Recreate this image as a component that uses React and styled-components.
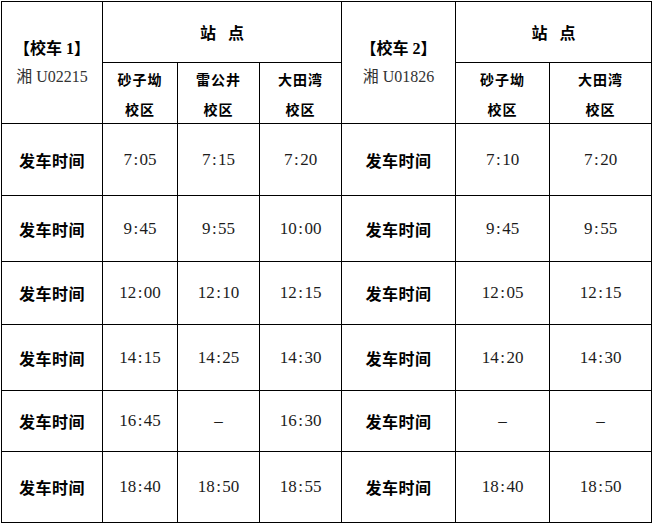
import React from "react";
import styled, { createGlobalStyle } from "styled-components";

const GlobalStyle = createGlobalStyle`
  html, body {
    margin: 0;
    padding: 0;
    background: #fff;
  }
  body {
    font-family: "Liberation Serif", "Noto Sans CJK SC", serif;
  }
`;

const columns = [101, 75, 82, 82, 114, 94, 102];
const rowHeights = [72, 66, 63, 66, 61, 71];

const bus1 = [
  ["7:05", "7:15", "7:20"],
  ["9:45", "9:55", "10:00"],
  ["12:00", "12:10", "12:15"],
  ["14:15", "14:25", "14:30"],
  ["16:45", "-", "16:30"],
  ["18:40", "18:50", "18:55"],
];

const bus2 = [
  ["7:10", "7:20"],
  ["9:45", "9:55"],
  ["12:05", "12:15"],
  ["14:20", "14:30"],
  ["-", "-"],
  ["18:40", "18:50"],
];

const Page = styled.div`
  padding: 1px 0 0 1px;
`;

const Table = styled.table`
  border-collapse: collapse;
  table-layout: fixed;
  width: ${columns.reduce((a, b) => a + b, 0)}px;
  color: #000;
`;

const Cell = styled.td`
  border: 1px solid #000;
  padding: 0;
  text-align: center;
  vertical-align: middle;
`;

const HeadRow = styled.tr`
  height: 61px;
`;

const BusTitle = styled.div`
  font-family: "Liberation Serif", "Noto Sans CJK SC", serif;
  font-weight: 700;
  font-size: 16px;
  line-height: 28px;
  color: #000;
`;

const Plate = styled.div`
  font-family: "Liberation Serif", "Noto Sans CJK SC", serif;
  font-size: 16px;
  line-height: 28px;
  color: #333;
`;

const Station = styled.div`
  font-family: "Noto Sans CJK SC", sans-serif;
  font-weight: 600;
  font-size: 16px;
  letter-spacing: 12px;
  padding-left: 12px;
  line-height: 20px;
`;

const Campus = styled.div`
  font-family: "Noto Sans CJK SC", sans-serif;
  font-weight: 600;
  font-size: 14px;
  letter-spacing: 1px;
  line-height: 28px;
  padding-top: 2px;
`;

const RowLabel = styled.span`
  font-family: "Noto Sans CJK SC", sans-serif;
  font-weight: 600;
  font-size: 16px;
  letter-spacing: 0.5px;
  color: #000;
`;

const TimeText = styled.span`
  font-family: "Liberation Serif", serif;
  font-size: 17px;
  color: #1c1c1c;
`;

const Colon = styled.span`
  margin: 0 1.5px;
`;

const Time = ({ value }) => {
  if (value === "-") return <TimeText>–</TimeText>;
  const [h, m] = value.split(":");
  return (
    <TimeText>
      {h}
      <Colon>:</Colon>
      {m}
    </TimeText>
  );
};

const BusHead = ({ name, plate }) => (
  <Cell rowSpan={2}>
    <BusTitle>【校车 {name}】</BusTitle>
    <Plate>湘 {plate}</Plate>
  </Cell>
);

const CampusCell = ({ name }) => (
  <Cell>
    <Campus>{name}</Campus>
    <Campus>校区</Campus>
  </Cell>
);

export default function App() {
  return (
    <Page>
      <GlobalStyle />
      <Table>
        <colgroup>
          {columns.map((w, i) => (
            <col key={i} style={{ width: w }} />
          ))}
        </colgroup>
        <tbody>
          <HeadRow>
            <BusHead name="1" plate="U02215" />
            <Cell colSpan={3}>
              <Station>站点</Station>
            </Cell>
            <BusHead name="2" plate="U01826" />
            <Cell colSpan={2}>
              <Station>站点</Station>
            </Cell>
          </HeadRow>
          <HeadRow>
            <CampusCell name="砂子坳" />
            <CampusCell name="雷公井" />
            <CampusCell name="大田湾" />
            <CampusCell name="砂子坳" />
            <CampusCell name="大田湾" />
          </HeadRow>
          {rowHeights.map((h, i) => (
            <tr key={i} style={{ height: h }}>
              <Cell>
                <RowLabel>发车时间</RowLabel>
              </Cell>
              {bus1[i].map((t, j) => (
                <Cell key={"a" + j}>
                  <Time value={t} />
                </Cell>
              ))}
              <Cell>
                <RowLabel>发车时间</RowLabel>
              </Cell>
              {bus2[i].map((t, j) => (
                <Cell key={"b" + j}>
                  <Time value={t} />
                </Cell>
              ))}
            </tr>
          ))}
        </tbody>
      </Table>
    </Page>
  );
}
